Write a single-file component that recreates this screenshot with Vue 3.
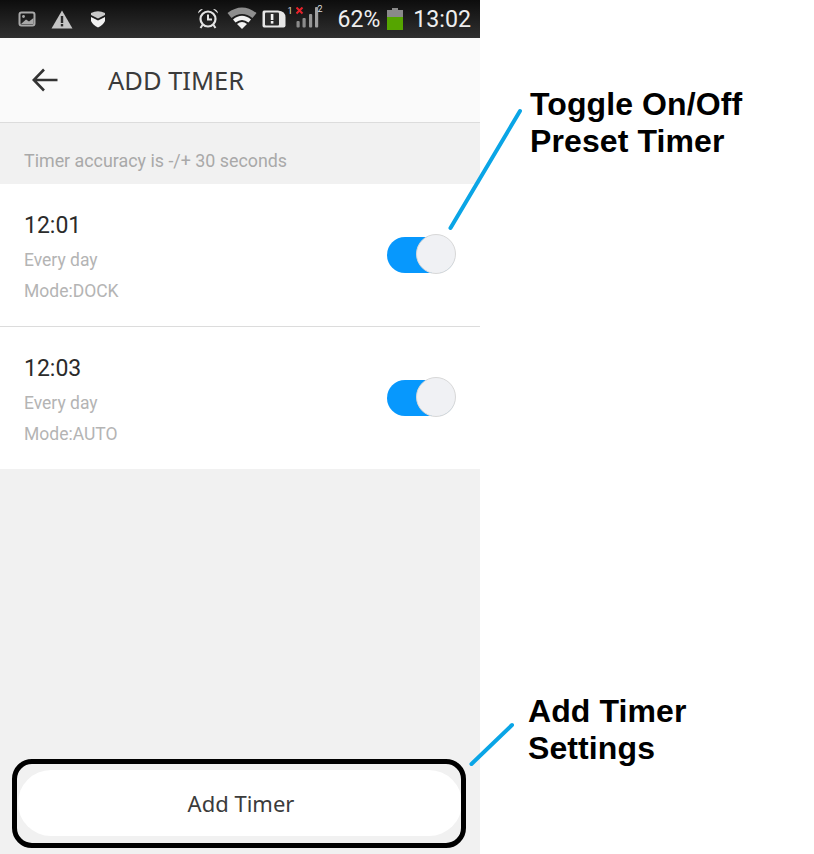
<template>
  <div class="page">
    <div class="phone">
      <div class="status">
        <div class="status-left">
          <svg class="ic pic" width="18" height="16" viewBox="0 0 18 16">
            <rect x="1.500" y="1.500" width="15" height="13" rx="2" fill="none" stroke="#a8a8a8" stroke-width="2"/>
            <circle cx="5.500" cy="5.500" r="1.400" fill="#a8a8a8"/>
            <path d="M3 13 L8 8.500 L11 10.500 L15.500 7 V13 Z" fill="#a8a8a8"/>
          </svg>
          <svg class="ic" width="22" height="19" viewBox="0 0 22 19">
            <path d="M11 0.500 L21.500 18.500 H0.500 Z" fill="#c4c4c4"/>
            <rect x="9.800" y="6" width="2.400" height="7" fill="#2a2a2a"/>
            <rect x="9.800" y="14" width="2.400" height="2.400" fill="#2a2a2a"/>
          </svg>
          <svg class="ic" width="16" height="18" viewBox="0 0 16 18">
            <path d="M1 3 Q8 -0.500 15 3 V5 L8 8.500 L1 5 Z" fill="#c8c8c8"/>
            <path d="M1 7 L8 10.500 L15 7 V11 Q13 15 8 17.500 Q3 15 1 11 Z" fill="#f2f2f2"/>
          </svg>
        </div>
        <div class="status-right">
          <svg width="26" height="22" viewBox="0 0 26 22">
            <circle cx="13" cy="11" r="7.500" fill="none" stroke="#e4e4e4" stroke-width="2.200"/>
            <path d="M13 6.500 V11.500 H17" fill="none" stroke="#e4e4e4" stroke-width="2"/>
            <path d="M3 5.500 Q3.500 1 8 1 Z M23 5.500 Q22.500 1 18 1 Z" fill="#e4e4e4"/>
            <path d="M7.500 17 L5.500 20 M18.500 17 L20.500 20" stroke="#e4e4e4" stroke-width="2"/>
          </svg>
          <svg class="wifi" width="30" height="22" viewBox="0 0 30 22">
            <path d="M0.500 6 Q15 -5 29.500 6 L25.500 11 Q15 3 4.500 11 Z" fill="#8e8e8e"/>
            <path d="M6 12.500 Q15 5 24 12.500 L21.500 15.500 Q15 10.500 8.500 15.500 Z" fill="#f2f2f2"/>
            <path d="M10 17 Q15 13 20 17 L15 22 Z" fill="#f2f2f2"/>
          </svg>
          <div class="sim">
            <svg width="24" height="18" viewBox="0 0 24 18">
              <path d="M2 0.500 H16 Q23.500 1 23.500 7.500 V15.500 Q23.500 17.500 21.500 17.500 H2 Q0.500 17.500 0.500 15.500 V2.500 Q0.500 0.500 2 0.500 Z" fill="#e6e6e6"/>
              <rect x="3" y="2.500" width="14" height="13" rx="1" fill="#2a2a2a"/>
              <rect x="8.800" y="4" width="2.600" height="6" fill="#f2f2f2"/>
              <rect x="8.800" y="11" width="2.600" height="2.600" fill="#f2f2f2"/>
            </svg>
            <span class="sup">1</span>
          </div>
          <div class="signal">
            <svg width="24" height="24" viewBox="0 0 24 24">
              <path d="M0.500 0.500 L6.500 6.500 M6.500 0.500 L0.500 6.500" stroke="#e8222a" stroke-width="2"/>
              <rect x="0.500" y="14" width="3.200" height="6.500" rx="1" fill="#8c8c8c"/>
              <rect x="6.500" y="11" width="3.200" height="9.500" rx="1" fill="#8c8c8c"/>
              <rect x="13" y="7" width="3.200" height="13.500" rx="1" fill="#969696"/>
              <rect x="19" y="0" width="3.200" height="20.500" rx="1" fill="#a0a0a0"/>
            </svg>
            <span class="sup">2</span>
          </div>
          <span class="pct">62%</span>
          <svg class="battery" width="16" height="22" viewBox="0 0 16 22">
            <rect x="5" y="0" width="6" height="2" fill="#8a8a8a"/>
            <rect x="0" y="2" width="16" height="7" fill="#8a8a8a"/>
            <rect x="0" y="9" width="16" height="13" fill="#55a500"/>
          </svg>
          <span class="clock">13:02</span>
        </div>
      </div>

      <div class="header">
        <svg class="back" width="26" height="24" viewBox="0 0 26 24">
          <path d="M12 1.500 L1.800 12 L12 22.500 M2 12 H25.500" fill="none" stroke="#333" stroke-width="2.600"/>
        </svg>
        <span class="title">ADD TIMER</span>
      </div>

      <div class="note">Timer accuracy is -/+ 30 seconds</div>

      <div class="list">
        <div v-for="t in timers" :key="t.time" class="row">
          <div class="info">
            <div class="time">{{ t.time }}</div>
            <div class="sub">Every day</div>
            <div class="sub">Mode:{{ t.mode }}</div>
          </div>
          <div class="switch"><div class="knob"></div></div>
        </div>
      </div>

      <div class="footer">
        <div class="add-btn">Add Timer</div>
      </div>
    </div>

    <!-- callouts drawn on top of the screenshot -->
    <div class="outline"></div>
    <svg class="lines" width="814" height="854">
      <path d="M450.500 228 L520 111" stroke="#0aa5e6" stroke-width="4" stroke-linecap="round"/>
      <path d="M471.500 764 L512 725" stroke="#0aa5e6" stroke-width="4" stroke-linecap="round"/>
    </svg>
    <div class="callout top">Toggle On/Off<br>Preset Timer</div>
    <div class="callout bottom">Add Timer<br>Settings</div>
  </div>
</template>

<script setup>
const timers = [
  { time: '12:01', mode: 'DOCK' },
  { time: '12:03', mode: 'AUTO' }
]
</script>

<style>
html, body {
  margin: 0;
  background: #fff;
}
</style>

<style scoped>
.page {
  position: relative;
  width: 814px;
  height: 854px;
  overflow: hidden;
  font-family: Roboto, sans-serif;
}

.phone {
  display: flex;
  flex-direction: column;
  width: 480px;
  height: 854px;
  background: #f1f1f1;
}

.status {
  display: flex;
  align-items: center;
  justify-content: space-between;
  height: 38px;
  padding: 0 9px 0 18px;
  background: linear-gradient(#0d0d0d, #303030);
  color: #eee;
}

.status-left {
  display: flex;
  align-items: center;
  gap: 17px;
}

.pic {
  margin-right: -2px;
}

.status-right {
  display: flex;
  align-items: center;
}

.wifi {
  margin-left: 6px;
  margin-top: -3px;
}

.sim {
  position: relative;
  display: flex;
  margin-left: 5px;
  width: 34px;
}

.signal {
  position: relative;
  display: flex;
  width: 32px;
}

.sup {
  position: absolute;
  top: -4px;
  left: 26px;
  font-size: 9px;
  color: #ddd;
}

.signal .sup {
  left: 22px;
  top: -3px;
}

.pct {
  margin-left: 10px;
  font-size: 23px;
}

.battery {
  margin-left: 7px;
}

.clock {
  margin-left: 10px;
  font-size: 23.200px;
}

.header {
  display: flex;
  align-items: center;
  height: 84px;
  background: #fafafa;
  border-bottom: 1px solid #dcdcdc;
}

.back {
  margin-left: 32px;
}

.title {
  margin-left: 50px;
  font-family: "Noto Sans", sans-serif;
  font-size: 25.500px;
  color: #3b3b3b;
}

.note {
  display: flex;
  align-items: center;
  height: 61px;
  padding: 14px 24px 0;
  box-sizing: border-box;
  font-size: 17.850px;
  color: #a9a9a9;
}

.list {
  background: #fff;
}

.row {
  display: flex;
  align-items: center;
  justify-content: space-between;
  height: 142px;
  padding: 0 24px;
  box-sizing: border-box;
}

.row + .row {
  height: 143px;
  border-top: 1px solid #dcdcdc;
}

.info {
  padding-top: 8px;
}

.time {
  font-size: 23px;
  line-height: 28px;
  color: #2b2b2b;
  margin-bottom: 5px;
}

.sub {
  font-size: 17.500px;
  line-height: 31px;
  color: #b4b4b4;
}

.switch {
  position: relative;
  width: 68px;
  margin-right: 1px;
  height: 36px;
  border-radius: 18px;
  background: #0798fd;
}

.knob {
  position: absolute;
  top: -3px;
  right: -1px;
  width: 40px;
  height: 40px;
  box-sizing: border-box;
  border-radius: 50%;
  border: 1px solid #d8d8d8;
  background: #f0f1f4;
}

.footer {
  display: flex;
  margin-top: auto;
  padding: 0 18px 18px;
}

.add-btn {
  flex: 1;
  height: 66px;
  padding-left: 2px;
  line-height: 67px;
  text-align: center;
  border-radius: 33px;
  background: #fff;
  font-family: "Noto Sans", sans-serif;
  font-size: 22px;
  color: #3b3b3b;
}

.outline {
  position: absolute;
  left: 12px;
  top: 759px;
  width: 454px;
  height: 89px;
  box-sizing: border-box;
  border: 5px solid #000;
  border-radius: 20px;
}

.lines {
  position: absolute;
  left: 0;
  top: 0;
}

.callout {
  position: absolute;
  font-family: "Liberation Sans", Arial, sans-serif;
  font-weight: 700;
  font-size: 32px;
  line-height: 37px;
  letter-spacing: 0.100px;
  color: #000;
}

.callout.top {
  left: 530px;
  top: 86px;
}

.callout.bottom {
  left: 528px;
  top: 693px;
}
</style>
